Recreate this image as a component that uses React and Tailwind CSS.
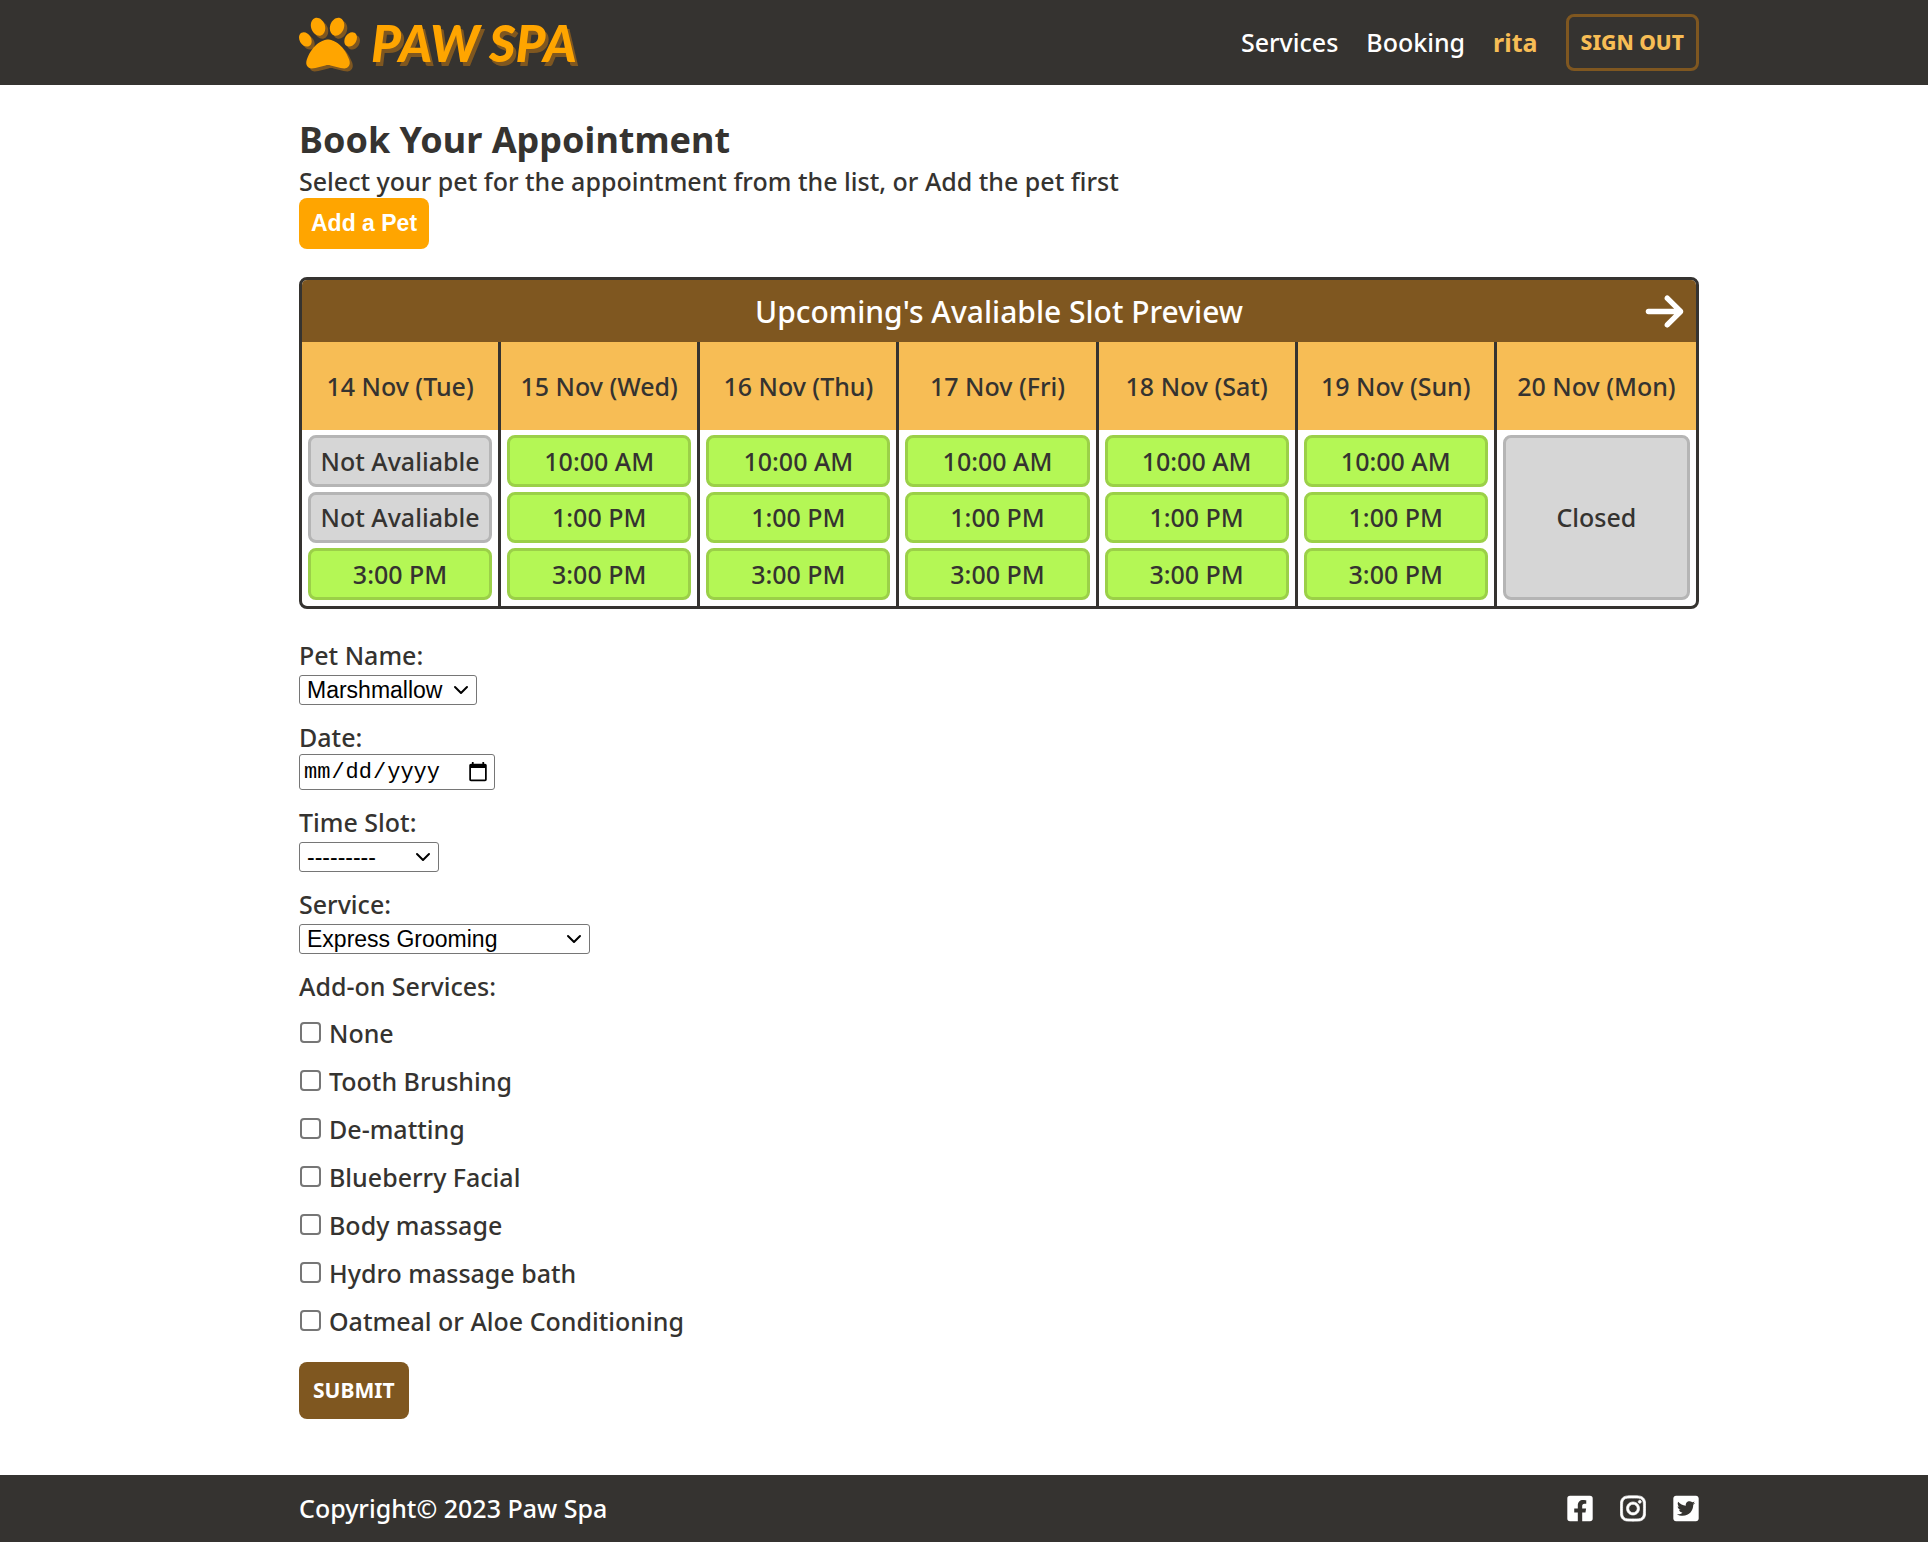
import React from "react";
import { FaArrowRight, FaPaw } from "react-icons/fa6";
import { FaFacebookSquare, FaInstagram, FaTwitterSquare } from "react-icons/fa";
import { ChevronDown } from "lucide-react";

const OPEN = ["10:00 AM", "1:00 PM", "3:00 PM"];
const DAYS = [
  { date: "14 Nov (Tue)", slots: ["Not Avaliable", "Not Avaliable", "3:00 PM"] },
  { date: "15 Nov (Wed)", slots: OPEN },
  { date: "16 Nov (Thu)", slots: OPEN },
  { date: "17 Nov (Fri)", slots: OPEN },
  { date: "18 Nov (Sat)", slots: OPEN },
  { date: "19 Nov (Sun)", slots: OPEN },
  { date: "20 Nov (Mon)", slots: null },
];

const ADD_ONS = [
  "None",
  "Tooth Brushing",
  "De-matting",
  "Blueberry Facial",
  "Body massage",
  "Hydro massage bath",
  "Oatmeal or Aloe Conditioning",
];

function Container({ className, children }) {
  return (
    <div className="pl-[70px]">
      <div className={"mx-auto w-full max-w-[1400px] " + className}>{children}</div>
    </div>
  );
}

function SelectField({ id, label, width, options }) {
  return (
    <div className="flex flex-col items-start pb-[18px]">
      <label htmlFor={id} className="pb-[6px] leading-7">{label}</label>
      <div className={"relative " + width}>
        <select
          id={id}
          className="block h-[30px] w-full appearance-none rounded-[3px] border border-[#767676] bg-white pl-[7px] font-['Liberation_Sans',sans-serif] text-[23px] leading-[28px] font-normal text-black"
        >
          {options.map((o) => (
            <option key={o}>{o}</option>
          ))}
        </select>
        <ChevronDown
          className="pointer-events-none absolute top-[3px] right-1 size-6 text-black"
          strokeWidth={2}
        />
      </div>
    </div>
  );
}

function Slot({ text }) {
  const open = text !== "Not Avaliable" && text !== "Closed";
  return (
    <div
      className={
        "flex flex-1 items-center justify-center rounded-lg border-3 pt-px " +
        (open ? "border-[#9bd048] bg-[#b4f755]" : "border-[#b5b5b5] bg-[#d6d6d6]")
      }
    >
      {text}
    </div>
  );
}

export default function App() {
  return (
    <div className="flex min-h-screen flex-col bg-white font-['Noto_Sans',sans-serif] text-[25px] font-medium text-[#353330]">
      <header className="bg-[#353330] text-white">
        <Container className="flex h-[85px] items-center justify-between">
          <a href="#home" className="flex items-center gap-[14px] text-[#ffa500]">
            <FaPaw className="size-[58px] drop-shadow-[3px_3px_0_#7f5720]" />
            <span className="font-[Lato,sans-serif] text-[51px] leading-none font-black italic [text-shadow:3px_4px_0_#7f5720]">
              PAW SPA
            </span>
          </a>
          <nav className="flex items-center gap-7">
            <a href="#services">Services</a>
            <a href="#booking">Booking</a>
            <a href="#profile" className="font-bold text-[#f7bd55]">rita</a>
            <button
              type="button"
              className="h-[57px] rounded-lg border-3 border-[#7f5720] px-3 text-[21px] font-extrabold text-[#f7bd55]"
            >
              SIGN OUT
            </button>
          </nav>
        </Container>
      </header>

      <main className="grow">
        <Container className="pt-[30px]">
          <h1 className="text-[36px] leading-[50px] font-bold">Book Your Appointment</h1>
          <p className="leading-[33px]">
            Select your pet for the appointment from the list, or Add the pet first
          </p>
          <button
            type="button"
            className="block h-[51px] rounded-lg bg-[#ffa500] px-3 font-['Liberation_Sans',sans-serif] text-[23px] font-bold text-white"
          >
            Add a Pet
          </button>

          <section className="mt-7 overflow-hidden rounded-lg border-3 border-[#353330]">
            <div className="grid h-[62px] grid-cols-[1fr_auto_1fr] items-center bg-[#7f5720] px-[10px] text-white">
              <h2 className="col-start-2 text-[30px] font-medium">Upcoming's Avaliable Slot Preview</h2>
              <button type="button" aria-label="Next week" className="justify-self-end">
                <FaArrowRight className="size-[43px]" />
              </button>
            </div>
            <div className="grid grid-cols-7">
              {DAYS.map((day) => (
                <div key={day.date} className="border-r-3 border-[#353330] last:border-r-0">
                  <div className="flex h-[88px] items-center justify-center bg-[#f7bd55] pt-px">
                    {day.date}
                  </div>
                  <div className="flex h-[176px] flex-col gap-[5px] px-[6px] pt-[5px] pb-[6px]">
                    {day.slots ? (
                      day.slots.map((s, i) => <Slot key={i} text={s} />)
                    ) : (
                      <Slot text="Closed" />
                    )}
                  </div>
                </div>
              ))}
            </div>
          </section>

          <form className="pt-8 pb-14" onSubmit={(e) => e.preventDefault()}>
            <SelectField id="pet" label="Pet Name:" width="w-[178px]" options={["Marshmallow"]} />
            <div className="flex flex-col items-start pb-[18px]">
              <label htmlFor="date" className="pb-[3px] leading-7">Date:</label>
              <input
                id="date"
                type="date"
                className="h-9 w-[196px] rounded-[3px] border border-[#767676] bg-white px-[3px] font-['Liberation_Mono',monospace] text-[22px] font-normal text-black"
              />
            </div>
            <SelectField id="time" label="Time Slot:" width="w-[140px]" options={["---------"]} />
            <SelectField id="service" label="Service:" width="w-[291px]" options={["Express Grooming"]} />
            <fieldset>
              <legend className="pb-[10px] leading-7">Add-on Services:</legend>
              {ADD_ONS.map((name) => (
                <label key={name} className="flex h-12 items-center gap-[7px]">
                  <input
                    type="checkbox"
                    className="mx-px mb-1 size-[21px] appearance-none rounded-[4px] border-2 border-[#767676] bg-white checked:bg-[#ffa500]"
                  />
                  {name}
                </label>
              ))}
            </fieldset>
            <button
              type="submit"
              className="mt-4 h-[57px] rounded-lg bg-[#7f5720] px-[14px] text-[21px] font-bold text-white"
            >
              SUBMIT
            </button>
          </form>
        </Container>
      </main>

      <footer className="bg-[#353330] text-white">
        <Container className="flex h-[67px] items-center justify-between">
          <p className="pt-px">Copyright© 2023 Paw Spa</p>
          <div className="flex gap-[27px]">
            <a href="#facebook" aria-label="Facebook">
              <FaFacebookSquare className="h-[29px] w-[26px]" />
            </a>
            <a href="#instagram" aria-label="Instagram">
              <FaInstagram className="h-[29px] w-[26px]" stroke="currentColor" strokeWidth={12} />
            </a>
            <a href="#twitter" aria-label="Twitter">
              <FaTwitterSquare className="h-[29px] w-[26px]" />
            </a>
          </div>
        </Container>
      </footer>
    </div>
  );
}
